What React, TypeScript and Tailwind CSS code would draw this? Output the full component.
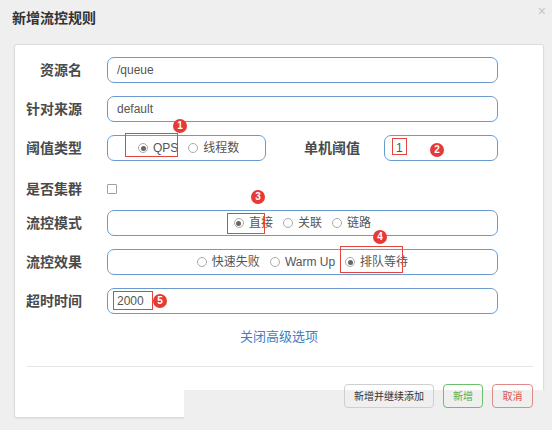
import type { ReactNode } from "react";

const boxes = [
  { id: 1, left: 125, top: 133, width: 53, height: 24 },
  { id: 2, left: 392, top: 138, width: 15, height: 17 },
  { id: 3, left: 227, top: 213, width: 38, height: 21 },
  { id: 4, left: 340, top: 246, width: 63, height: 27 },
  { id: 5, left: 113, top: 291, width: 40, height: 19 },
];

const badges = [
  { n: 1, x: 180, y: 126 },
  { n: 2, x: 437, y: 150 },
  { n: 3, x: 258, y: 197 },
  { n: 4, x: 380, y: 237 },
  { n: 5, x: 160, y: 301 },
];

function Radio({ label, checked }: { label: string; checked?: boolean }) {
  return (
    <span className="flex items-center gap-[5px]">
      <span className="flex h-[10px] w-[10px] items-center justify-center rounded-full border border-[#aaa] bg-white">
        {checked && <span className="h-[5px] w-[5px] rounded-full bg-[#666]" />}
      </span>
      <span>{label}</span>
    </span>
  );
}

function Label({ children, className = "" }: { children: ReactNode; className?: string }) {
  return (
    <div className={`shrink-0 text-right text-[14px] font-bold text-[#4a4a4a] ${className}`}>
      {children}
    </div>
  );
}

const field =
  "flex h-[26px] items-center rounded-[7px] border-[1.5px] border-[#6a9bd0] bg-white text-[12px] text-[#555]";

export default function App() {
  return (
    <div className="relative h-[430px] w-[552px] overflow-hidden bg-[#efefef] font-['Liberation_Sans','Noto_Sans_CJK_SC',sans-serif] text-[#333]">
      <h2 className="h-[44px] pl-3 pt-[9px] text-[14px] font-bold leading-[18px] text-[#333]">
        新增流控规则
      </h2>
      <span className="absolute right-[6px] top-[1px] text-[14px] text-[#c4c4c4]">×</span>

      {/* Card */}
      <div className="ml-[14px] h-[374px] w-[530px] rounded-[3px] border border-[#dcdcdc] bg-white pt-[12px] shadow-[0_1px_2px_rgba(0,0,0,0.06)]">
        <div className="flex h-[26px] items-center">
          <Label className="mr-[25px] w-[67px]">资源名</Label>
          <div className={`${field} w-[391px] pl-[9px]`}>/queue</div>
        </div>

        <div className="mt-[13px] flex h-[26px] items-center">
          <Label className="mr-[25px] w-[67px]">针对来源</Label>
          <div className={`${field} w-[391px] pl-[9px]`}>default</div>
        </div>

        <div className="mt-[13px] flex h-[26px] items-center">
          <Label className="mr-[25px] w-[67px]">阈值类型</Label>
          <div className={`${field} w-[159px] gap-[10px] pl-[30px]`}>
            <Radio label="QPS" checked />
            <Radio label="线程数" />
          </div>
          <Label className="mr-[24px] w-[94px]">单机阈值</Label>
          <div className={`${field} w-[114px] pl-[11px]`}>1</div>
        </div>

        <div className="mt-[15px] flex h-[26px] items-center">
          <Label className="mr-[25px] w-[67px]">是否集群</Label>
          <span className="h-[10px] w-[10px] rounded-[1px] border border-[#a0a0a0] bg-white" />
        </div>

        <div className="mt-[8px] flex h-[26px] items-center">
          <Label className="mr-[25px] w-[67px]">流控模式</Label>
          <div className={`${field} w-[391px] justify-center gap-[10px]`}>
            <Radio label="直接" checked />
            <Radio label="关联" />
            <Radio label="链路" />
          </div>
        </div>

        <div className="mt-[13px] flex h-[26px] items-center">
          <Label className="mr-[25px] w-[67px]">流控效果</Label>
          <div className={`${field} w-[391px] justify-center gap-[10px]`}>
            <Radio label="快速失败" />
            <Radio label="Warm Up" />
            <Radio label="排队等待" checked />
          </div>
        </div>

        <div className="mt-[13px] flex h-[26px] items-center">
          <Label className="mr-[25px] w-[67px]">超时时间</Label>
          <div className={`${field} w-[391px] pl-[9px]`}>2000</div>
        </div>

        <div className="mt-[14px] text-center text-[13px] leading-[18px] text-[#3c80c4]">
          关闭高级选项
        </div>

        <div className="ml-[12px] mt-[20px] h-px w-[506px] bg-[#e6e6e6]" />

        <div className="relative z-10 mt-[17px] flex justify-end gap-[9px] pr-[10px] text-[10px]">
          <button className="h-[24px] w-[90px] rounded-[4px] border border-[#cfcfcf] bg-transparent text-[#333]">
            新增并继续添加
          </button>
          <button className="h-[24px] w-[40px] rounded-[4px] border border-[#6cbf6c] bg-transparent text-[#4cae4c]">
            新增
          </button>
          <button className="h-[24px] w-[41px] rounded-[4px] border border-[#e08a8a] bg-transparent text-[#d9534f]">
            取消
          </button>
        </div>
      </div>

      {/* screenshot crop overlay */}
      <div className="absolute bottom-0 left-[184px] right-0 top-[390px] z-[5] bg-[#efefef]" />

      {/* annotations */}
      {boxes.map((b) => (
        <div
          key={b.id}
          className="pointer-events-none absolute z-20 border-[1.5px] border-[#e2463f]"
          style={{ left: b.left, top: b.top, width: b.width, height: b.height }}
        />
      ))}
      {badges.map((b) => (
        <div
          key={b.n}
          className="absolute z-20 flex h-[14px] w-[14px] items-center justify-center rounded-full bg-[#e53a35] text-[10px] font-bold leading-none text-white"
          style={{ left: b.x - 7, top: b.y - 7 }}
        >
          {b.n}
        </div>
      ))}
    </div>
  );
}
